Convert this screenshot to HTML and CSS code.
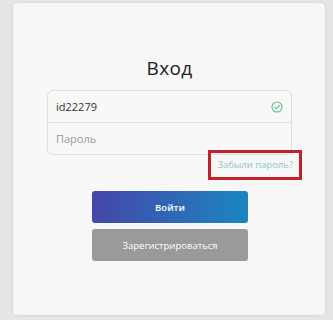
FILE: index.html
```html
<!DOCTYPE html>
<html lang="ru">
<head>
  <meta charset="UTF-8" />
  <meta name="viewport" content="width=device-width, initial-scale=1.0"/>
  <title>Вход</title>
  <link rel="stylesheet" href="styles.css">
</head>
<body>
  <div class="card">
    <h1 class="title">Вход</h1>
    <div class="fields">
      <div class="field">
        <span class="value">id22279</span>
        <svg class="check" width="12" height="12" viewBox="0 0 12 12">
          <circle cx="6" cy="6" r="5" fill="none" stroke="#5fb98a" stroke-width="1.1"/>
          <path d="M3.6 6.1 L5.3 7.7 L8.4 4.5" fill="none" stroke="#5fb98a" stroke-width="1.1" stroke-linecap="round" stroke-linejoin="round"/>
        </svg>
      </div>
      <div class="field">
        <span class="placeholder">Пароль</span>
      </div>
    </div>
    <div class="forgot-row">
      <a class="forgot" href="#">Забыли пароль?</a>
    </div>
    <div class="actions">
      <button class="btn btn-login">Войти</button>
      <button class="btn btn-register">Зарегистрироваться</button>
    </div>
  </div>
</body>
</html>
```
FILE: styles.css
```css
body {
  margin: 0;
  height: 320px;
  background: #e6e6e6;
  font-family: 'Open Sans', sans-serif;
  padding: 3px 8px 5px 13px;
  box-sizing: border-box;
}

.card {
  height: 312px;
  background: #f7f7f7;
  border-radius: 4px;
  box-shadow: 0 0 3px rgba(0, 0, 0, 0.12);
  padding: 52px 33px 0 34px;
  box-sizing: border-box;
}

.title {
  margin: 0 0 9px;
  text-align: center;
  font-size: 19px;
  font-weight: 400;
  color: #222;
  line-height: 26px;
  letter-spacing: 0.3px;
}

.fields {
  border: 1px solid #dedede;
  border-radius: 6px;
  background: #f8f8f8;
}

.field {
  height: 31px;
  display: flex;
  align-items: center;
  justify-content: space-between;
  padding: 0 8px 0 8px;
}

.field + .field {
  border-top: 1px solid #e2e2e2;
}

.value {
  font-size: 11px;
  color: #333;
}

.placeholder {
  font-size: 11px;
  color: #999;
}

.forgot-row {
  display: flex;
  justify-content: flex-end;
  margin-right: -10px;
  margin-top: -5px;
}

.forgot {
  display: block;
  border: 3px solid #c2212b;
  padding: 0 6px;
  height: 24px;
  line-height: 24px;
  font-size: 9.5px;
  color: #8fc5cc;
  text-decoration: none;
}

.actions {
  display: flex;
  flex-direction: column;
  align-items: center;
  gap: 6px;
  margin-top: 11px;
  margin-left: 1px;
}

.btn {
  width: 156px;
  height: 32px;
  border: none;
  border-radius: 3px;
  color: #fff;
  font-family: 'Open Sans', sans-serif;
  font-size: 9.5px;
  cursor: pointer;
}

.btn-login {
  background: linear-gradient(90deg, #4646a8, #1a86c1);
  font-weight: 600;
}

.btn-register {
  background: #9a9a9a;
}
```
